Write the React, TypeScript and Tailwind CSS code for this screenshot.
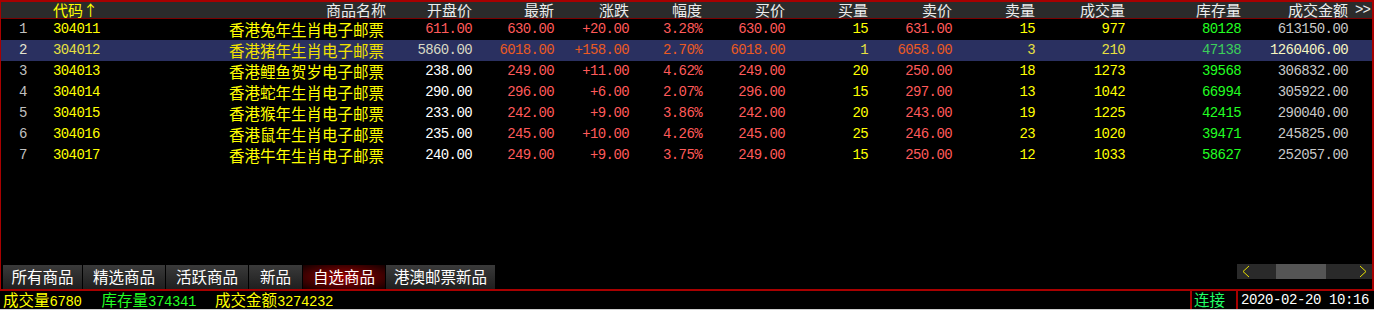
import React from 'react'

const cjk = "font-['Noto_Sans_CJK_SC',sans-serif]"
const mono = "font-['Liberation_Mono',monospace]"
const cols =
    'grid grid-cols-[44px_155px_186px_86px_82px_75px_73px_83px_83px_84px_83px_90px_116px_107px_1fr]'

type Row = [number, string, string, string, string, string, string, string, number, string, number, number, number, string]

const rows: Row[] = [
    [1, '304011', '香港兔年生肖电子邮票', '611.00', '630.00', '+20.00', '3.28%', '630.00', 15, '631.00', 15, 977, 80128, '613150.00'],
    [2, '304012', '香港猪年生肖电子邮票', '5860.00', '6018.00', '+158.00', '2.70%', '6018.00', 1, '6058.00', 3, 210, 47138, '1260406.00'],
    [3, '304013', '香港鲤鱼贺岁电子邮票', '238.00', '249.00', '+11.00', '4.62%', '249.00', 20, '250.00', 18, 1273, 39568, '306832.00'],
    [4, '304014', '香港蛇年生肖电子邮票', '290.00', '296.00', '+6.00', '2.07%', '296.00', 15, '297.00', 13, 1042, 66994, '305922.00'],
    [5, '304015', '香港猴年生肖电子邮票', '233.00', '242.00', '+9.00', '3.86%', '242.00', 20, '243.00', 19, 1225, 42415, '290040.00'],
    [6, '304016', '香港鼠年生肖电子邮票', '235.00', '245.00', '+10.00', '4.26%', '245.00', 25, '246.00', 23, 1020, 39471, '245825.00'],
    [7, '304017', '香港牛年生肖电子邮票', '240.00', '249.00', '+9.00', '3.75%', '249.00', 15, '250.00', 12, 1033, 58627, '252057.00'],
]

const headers = ['开盘价', '最新', '涨跌', '幅度', '买价', '买量', '卖价', '卖量', '成交量', '库存量', '成交金额']

const tabs = [
    { label: '所有商品', w: 'w-[79px]' },
    { label: '精选商品', w: 'w-[82px]' },
    { label: '活跃商品', w: 'w-[82px]' },
    { label: '新品', w: 'w-[53px]' },
    { label: '自选商品', w: 'w-[82px]', active: true },
    { label: '港澳邮票新品', w: 'w-[109px]' },
]

// digits in the original are a bitmap song font, ~7.8px per char
const num = `${mono} text-[14px] tracking-[-0.6px] leading-[21px]`

function DataRow({ r }: { r: Row }) {
    const sel = r[0] === 2
    const red = sel ? 'text-[#ea5a22]' : 'text-[#ff5a5a]'
    const yellow = sel ? 'text-[#e8e040]' : 'text-[#ffff00]'
    const green = sel ? 'text-[#3ccf5a]' : 'text-[#22ff22]'
    const right = `${num} text-right`
    return (
        <div className={`${cols} h-[21px] items-center ${sel ? 'bg-[#2a3060]' : ''}`}>
            <span className={`${num} text-center ${sel ? 'text-[#e4e4d0]' : 'text-[#c0c0c0]'}`}>{r[0]}</span>
            <span className={`${num} pl-[8px] ${yellow}`}>{r[1]}</span>
            <span className={`${cjk} text-[15.5px] leading-[21px] text-right pr-[2px] ${sel ? 'text-[#f2e200]' : 'text-[#ffff00]'}`}>{r[2]}</span>
            <span className={`${right} ${r[0] === 1 ? 'text-[#ff5a5a]' : sel ? 'text-[#d8d8c4]' : 'text-white'}`}>{r[3]}</span>
            <span className={`${right} ${red}`}>{r[4]}</span>
            <span className={`${right} ${red}`}>{r[5]}</span>
            <span className={`${right} ${red}`}>{r[6]}</span>
            <span className={`${right} ${red}`}>{r[7]}</span>
            <span className={`${right} ${yellow}`}>{r[8]}</span>
            <span className={`${right} ${red}`}>{r[9]}</span>
            <span className={`${right} ${yellow}`}>{r[10]}</span>
            <span className={`${right} ${yellow}`}>{r[11]}</span>
            <span className={`${right} ${green}`}>{r[12]}</span>
            <span className={`${right} ${sel ? 'text-[#f6f6c0]' : 'text-[#c8c8c8]'}`}>{r[13]}</span>
            <span />
        </div>
    )
}

export default function App() {
    return (
        <div className="w-[1374px] h-[310px] bg-black overflow-hidden flex flex-col">
            <div className="h-[291px] border-t-2 border-l border-r-2 border-b-2 border-[#a80000] flex flex-col">
                <div className={`${cols} h-[17px] bg-[#2b2b2b] border-b border-[#7a0000] items-center text-[#ececec] ${cjk} text-[15px] leading-[16px]`}>
                    <span />
                    <span className="pl-[8px] text-[#ffff00]">代码↑</span>
                    <span className="text-right">商品名称</span>
                    {headers.map((h) => (
                        <span key={h} className="text-right">
                            {h}
                        </span>
                    ))}
                    <span className={`${mono} text-[14px] pl-[7px] tracking-[-1px]`}>&gt;&gt;</span>
                </div>

                {rows.map((r) => (
                    <DataRow key={r[0]} r={r} />
                ))}

                <div className="flex-1" />

                <div className="flex items-start">
                    <div className="flex gap-[1px] pl-[2px]">
                        {tabs.map((t) => (
                            <div
                                key={t.label}
                                className={`${t.w} h-[24px] flex items-center justify-center text-white ${cjk} text-[15.5px] ${
                                    t.active
                                        ? 'bg-[radial-gradient(ellipse_at_center,#a00000_0%,#4a0000_60%,#140000_100%)]'
                                        : 'bg-gradient-to-b from-[#3a3a3a] to-[#1f1f1f]'
                                }`}
                            >
                                {t.label}
                            </div>
                        ))}
                    </div>
                    <div className="ml-auto mt-[-1px] w-[135px] h-[15px] bg-[#2a2a2a] flex items-center">
                        <svg width="26" height="15" viewBox="0 0 26 15" className="shrink-0">
                            <path d="M12 2 L6 7.5 L12 13" stroke="#e8e000" strokeWidth="1" fill="none" />
                        </svg>
                        <div className="ml-[13px] w-[50px] h-[15px] bg-[#555555]" />
                        <div className="flex-1" />
                        <svg width="26" height="15" viewBox="0 0 26 15" className="shrink-0">
                            <path d="M14 2 L20 7.5 L14 13" stroke="#e8e000" strokeWidth="1" fill="none" />
                        </svg>
                    </div>
                </div>
            </div>

            <div className="h-[19px] border-b border-[#d0d0d0] flex items-center">
                <div className={`flex items-baseline pl-[3px] ${cjk} text-[15.5px] leading-[18px]`}>
                    <span className="text-[#ffff00]">成交量</span>
                    <span className={`${mono} text-[14px] tracking-[-0.4px] text-[#ffff00]`}>6780</span>
                    <span className="ml-[20px] text-[#22ff22]">库存量</span>
                    <span className={`${mono} text-[14px] tracking-[-0.4px] text-[#22ff22]`}>374341</span>
                    <span className="ml-[19px] text-[#ffff00]">成交金额</span>
                    <span className={`${mono} text-[14px] tracking-[-0.4px] text-[#ffff00]`}>3274232</span>
                </div>
                <div className="ml-auto h-full flex items-stretch">
                    <div className={`w-[46px] border-l-2 border-[#a80000] pl-[2px] flex items-center text-[#22ff66] ${cjk} text-[15.5px]`}>
                        连接
                    </div>
                    <div className={`w-[138px] border-l-2 border-[#a80000] pl-[3px] flex items-center text-white ${mono} text-[14px] tracking-[-0.4px]`}>
                        2020-02-20 10:16
                    </div>
                </div>
            </div>
        </div>
    )
}
